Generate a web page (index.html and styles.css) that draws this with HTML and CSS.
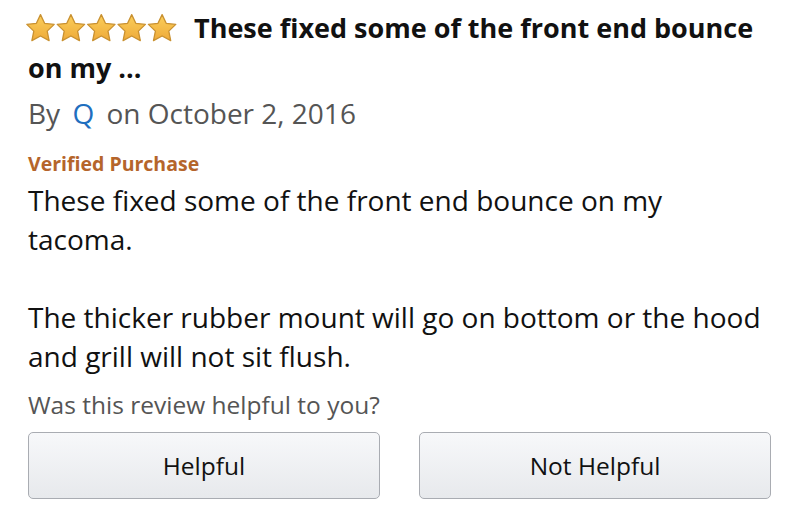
FILE: index.html
```html
<!DOCTYPE html>
<html>
<head>
<meta charset="utf-8">
<link rel="stylesheet" href="styles.css">
</head>
<body>
<div class="review">
  <h1 class="title"><span class="stars"><svg viewBox="0 -1 154 29" width="154" height="29">
    <defs>
      <linearGradient id="g" x1="0" y1="0" x2="0" y2="1">
        <stop offset="0" stop-color="#fbcf5a"/>
        <stop offset="1" stop-color="#eeaa3a"/>
      </linearGradient>
      <path id="s" d="M15.5 0.6 L19.6 9.3 L29.2 10.4 L22.2 17.1 L24.1 26.6 L15.5 22 L6.9 26.6 L8.8 17.1 L1.8 10.4 L11.4 9.3 Z"/>
    </defs>
    <use href="#s" x="0" fill="url(#g)" stroke="#c99131" stroke-width="1.3" stroke-linejoin="round"/>
    <use href="#s" x="30.4" fill="url(#g)" stroke="#c99131" stroke-width="1.3" stroke-linejoin="round"/>
    <use href="#s" x="60.8" fill="url(#g)" stroke="#c99131" stroke-width="1.3" stroke-linejoin="round"/>
    <use href="#s" x="91.2" fill="url(#g)" stroke="#c99131" stroke-width="1.3" stroke-linejoin="round"/>
    <use href="#s" x="121.6" fill="url(#g)" stroke="#c99131" stroke-width="1.3" stroke-linejoin="round"/>
  </svg></span>These fixed some of the front end bounce on my ...</h1>
  <div class="byline">By <a class="author">Q</a> on October 2, 2016</div>
  <div class="verified">Verified Purchase</div>
  <div class="body">These fixed some of the front end bounce on my<br>tacoma.<br><br>The thicker rubber mount will go on bottom or the hood and grill will not sit flush.</div>
  <div class="question">Was this review helpful to you?</div>
  <div class="buttons">
    <button class="btn">Helpful</button>
    <button class="btn">Not Helpful</button>
  </div>
</div>
</body>
</html>
```
FILE: styles.css
```css
html, body {
  margin: 0;
  padding: 0;
  background: #fff;
}
.review {
  padding: 8px 27px 0 28px;
  font-family: "Open Sans", sans-serif;
  color: #111;
}
.title {
  margin: 0;
  font-size: 27px;
  font-weight: 700;
  line-height: 40px;
}
.stars {
  display: inline-block;
  vertical-align: -4px;
  margin-left: -3px;
  margin-right: 15px;
}
.stars svg {
  display: block;
}
.byline {
  margin-top: 7px;
  font-size: 28px;
  line-height: 36px;
  color: #555;
}
.author {
  color: #1f6fbf;
  margin: 0 5px;
}
.verified {
  margin-top: 19px;
  font-size: 19.5px;
  font-weight: 700;
  line-height: 28px;
  color: #b5652b;
}
.body {
  margin-top: 3px;
  font-size: 28px;
  line-height: 39px;
  color: #111;
}
.question {
  margin-top: 14px;
  font-size: 24.5px;
  line-height: 30px;
  color: #555;
}
.buttons {
  display: flex;
  gap: 39px;
  margin-top: 12px;
}
.btn {
  width: 352px;
  height: 67px;
  border: 1px solid #a9acb2;
  border-radius: 5px;
  background: linear-gradient(#f7f8fa, #e7e9ec);
  font-family: "Open Sans", sans-serif;
  font-size: 24.5px;
  color: #111;
  padding: 0;
}
```
